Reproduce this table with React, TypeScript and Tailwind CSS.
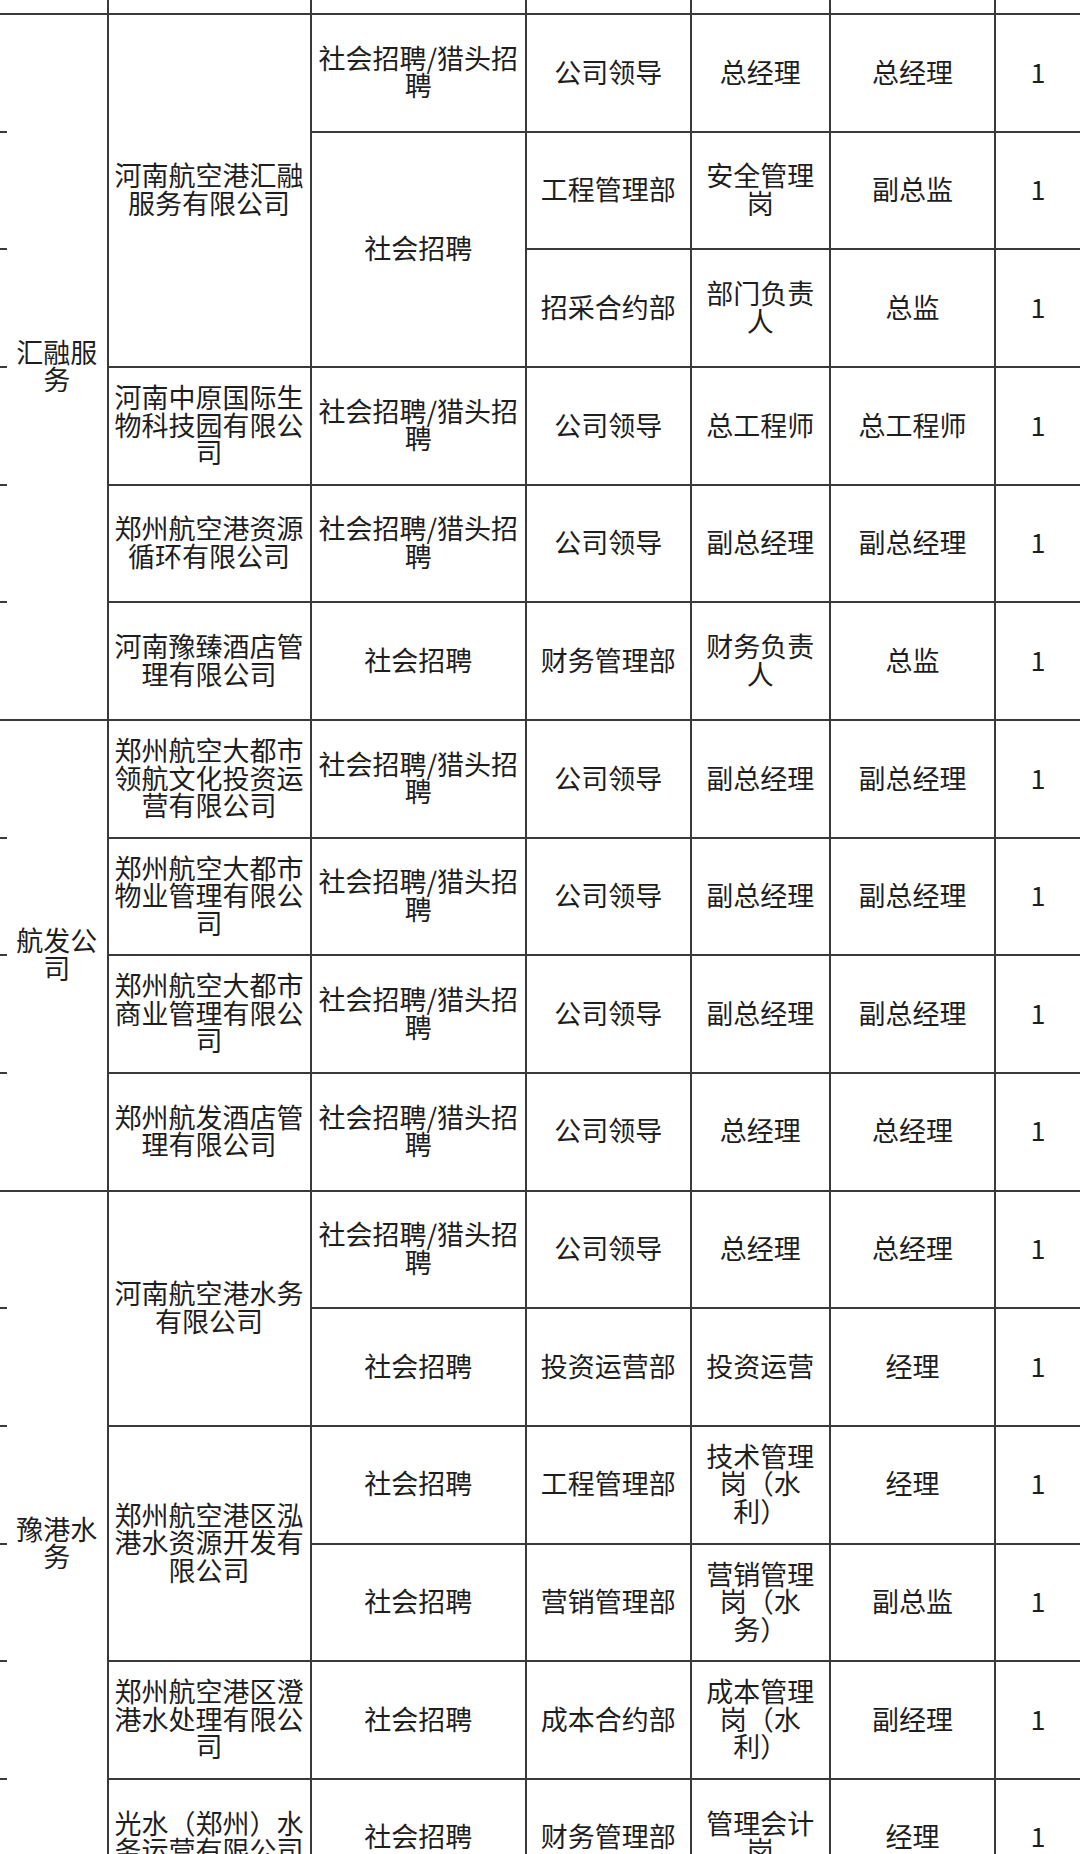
import clsx from "clsx";

type Cell = { r: number; c: number; span?: number; text?: string };

// grid line helpers, written out so tailwind picks them up
const ROW: Record<number, string> = {
  1: "row-start-1",
  2: "row-start-2",
  3: "row-start-3",
  4: "row-start-4",
  5: "row-start-5",
  6: "row-start-6",
  7: "row-start-7",
  8: "row-start-8",
  9: "row-start-9",
  10: "row-start-10",
  11: "row-start-11",
  12: "row-start-12",
  13: "row-start-13",
  14: "row-start-14",
  15: "row-start-15",
  16: "row-start-16",
  17: "row-start-17",
};

const COL: Record<number, string> = {
  1: "col-start-1",
  2: "col-start-2",
  3: "col-start-3",
  4: "col-start-4",
  5: "col-start-5",
  6: "col-start-6",
  7: "col-start-7",
  8: "col-start-8",
  9: "col-start-9",
};

const SPAN: Record<number, string> = {
  1: "row-span-1",
  2: "row-span-2",
  3: "row-span-3",
  4: "row-span-4",
  6: "row-span-6",
};

const groups: Cell[] = [
  { r: 2, c: 2, span: 6, text: "汇融服务" },
  { r: 8, c: 2, span: 4, text: "航发公司" },
  { r: 12, c: 2, span: 6, text: "豫港水务" },
];

const companies: Cell[] = [
  { r: 2, c: 3, span: 3, text: "河南航空港汇融服务有限公司" },
  { r: 5, c: 3, text: "河南中原国际生物科技园有限公司" },
  { r: 6, c: 3, text: "郑州航空港资源循环有限公司" },
  { r: 7, c: 3, text: "河南豫臻酒店管理有限公司" },
  { r: 8, c: 3, text: "郑州航空大都市领航文化投资运营有限公司" },
  { r: 9, c: 3, text: "郑州航空大都市物业管理有限公司" },
  { r: 10, c: 3, text: "郑州航空大都市商业管理有限公司" },
  { r: 11, c: 3, text: "郑州航发酒店管理有限公司" },
  { r: 12, c: 3, span: 2, text: "河南航空港水务有限公司" },
  { r: 14, c: 3, span: 2, text: "郑州航空港区泓港水资源开发有限公司" },
  { r: 16, c: 3, text: "郑州航空港区澄港水处理有限公司" },
  { r: 17, c: 3, text: "光水（郑州）水务运营有限公司" },
];

const HEAD = "社会招聘/猎头招聘";
const SOCIAL = "社会招聘";

const channels: Cell[] = [
  { r: 2, c: 4, text: HEAD },
  { r: 3, c: 4, span: 2, text: SOCIAL },
  { r: 5, c: 4, text: HEAD },
  { r: 6, c: 4, text: HEAD },
  { r: 7, c: 4, text: SOCIAL },
  { r: 8, c: 4, text: HEAD },
  { r: 9, c: 4, text: HEAD },
  { r: 10, c: 4, text: HEAD },
  { r: 11, c: 4, text: HEAD },
  { r: 12, c: 4, text: HEAD },
  { r: 13, c: 4, text: SOCIAL },
  { r: 14, c: 4, text: SOCIAL },
  { r: 15, c: 4, text: SOCIAL },
  { r: 16, c: 4, text: SOCIAL },
  { r: 17, c: 4, text: SOCIAL },
];

// dept, post, level for grid rows 2..17
const lines: [string, string, string][] = [
  ["公司领导", "总经理", "总经理"],
  ["工程管理部", "安全管理岗", "副总监"],
  ["招采合约部", "部门负责人", "总监"],
  ["公司领导", "总工程师", "总工程师"],
  ["公司领导", "副总经理", "副总经理"],
  ["财务管理部", "财务负责人", "总监"],
  ["公司领导", "副总经理", "副总经理"],
  ["公司领导", "副总经理", "副总经理"],
  ["公司领导", "副总经理", "副总经理"],
  ["公司领导", "总经理", "总经理"],
  ["公司领导", "总经理", "总经理"],
  ["投资运营部", "投资运营", "经理"],
  ["工程管理部", "技术管理岗（水利）", "经理"],
  ["营销管理部", "营销管理岗（水务）", "副总监"],
  ["成本合约部", "成本管理岗（水利）", "副经理"],
  ["财务管理部", "管理会计岗", "经理"],
];

const detail: Cell[] = lines.flatMap(([dept, post, level], i) => [
  { r: i + 2, c: 5, text: dept },
  { r: i + 2, c: 6, text: post },
  { r: i + 2, c: 7, text: level },
  { r: i + 2, c: 8, text: "1" },
]);

// cropped columns at both edges and the cropped header row
const edges: Cell[] = [
  ...Array.from({ length: 17 }, (_, i) => ({ r: i + 1, c: 1 })),
  ...Array.from({ length: 17 }, (_, i) => ({ r: i + 1, c: 9 })),
  ...[2, 3, 4, 5, 6, 7, 8].map((c) => ({ r: 1, c })),
];

const cells = [...edges, ...groups, ...companies, ...channels, ...detail];

export default function App() {
  return (
    <div className="h-[1854px] w-[1080px] overflow-hidden bg-white font-['Noto_Sans_CJK_SC','Noto_Sans',sans-serif] text-[27px] leading-[27.5px] text-[#1e1e1e] [text-spacing-trim:space-all]">
      <div className="grid w-max grid-cols-[5px_99.5px_201px_213.5px_162.7px_137.3px_163px_84px_60px] grid-rows-[13px_repeat(16,115.67px)] gap-[2px] bg-[#3a3a3a]">
        {cells.map((cell) => (
          <div
            key={`${cell.r}-${cell.c}`}
            className={clsx(
              "flex items-center justify-center bg-white px-1 pb-[3px] text-center",
              ROW[cell.r],
              COL[cell.c],
              SPAN[cell.span ?? 1],
            )}
          >
            {cell.text}
          </div>
        ))}
      </div>
    </div>
  );
}
